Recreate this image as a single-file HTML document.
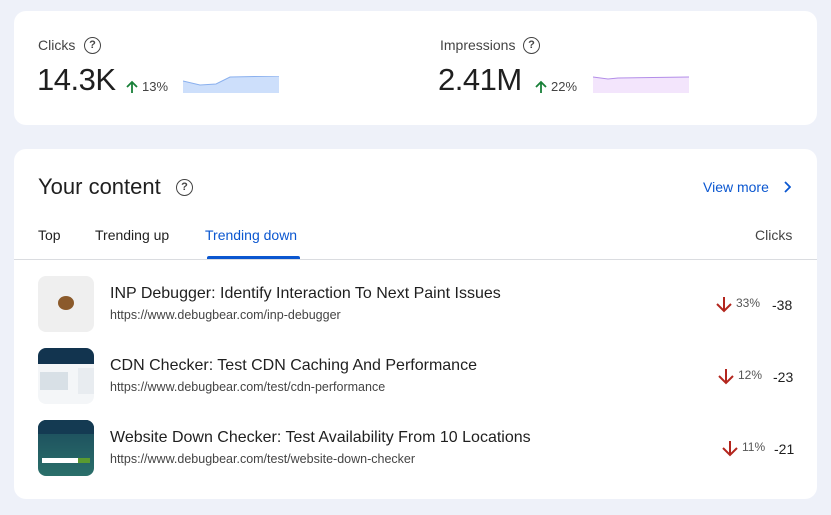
<!DOCTYPE html>
<html><head><style>
*{margin:0;padding:0;box-sizing:border-box}
body{width:831px;height:515px;background:#eef1f9;font-family:"Liberation Sans",Arial,sans-serif;position:relative;overflow:hidden;color:#1f1f1f}
.card{position:absolute;background:#fff;border-radius:12px}
.a{position:absolute;white-space:nowrap;line-height:1.15}
.q{position:absolute;width:17px;height:17px;border:1.6px solid #444;border-radius:50%;font-size:11px;font-weight:bold;text-align:center;line-height:14px;color:#444}
.t{font-size:16px;color:#1f1f1f}
.u{font-size:12.5px;color:#444}
.p{font-size:12px;color:#555}
.n{font-size:14px;color:#1f1f1f}
.th{position:absolute;left:38px;width:56px;height:56px;border-radius:8px;overflow:hidden}
</style></head><body>
<div class="card" style="left:14px;top:11px;width:803px;height:114px"></div>
<div class="a" style="left:38px;top:37px;font-size:14px;color:#444">Clicks</div>
<div class="q" style="left:84px;top:37px">?</div>
<div class="a" style="left:37px;top:62px;font-size:31px;letter-spacing:-0.5px;color:#1f1f1f">14.3K</div>
<svg class="a" style="left:126px;top:80px" width="12" height="14"><path d="M6 13V2M1 7l5-5 5 5" stroke="#188038" stroke-width="1.8" fill="none"/></svg>
<div class="a" style="left:142px;top:80px;font-size:13px;color:#444">13%</div>
<svg class="a" style="left:183px;top:76px" width="96" height="17"><path d="M0 5 L17 9 L33 8 L47 1 L96 0 L96 17 L0 17Z" fill="#cddffb"/><path d="M0 5 L17 9 L33 8 L47 1 L96 0" stroke="#8ab0ee" fill="none"/></svg>
<div class="a" style="left:440px;top:37px;font-size:14px;color:#444">Impressions</div>
<div class="q" style="left:523px;top:37px">?</div>
<div class="a" style="left:438px;top:62px;font-size:31px;letter-spacing:-0.5px;color:#1f1f1f">2.41M</div>
<svg class="a" style="left:535px;top:80px" width="12" height="14"><path d="M6 13V2M1 7l5-5 5 5" stroke="#188038" stroke-width="1.8" fill="none"/></svg>
<div class="a" style="left:551px;top:80px;font-size:13px;color:#444">22%</div>
<svg class="a" style="left:593px;top:76px" width="96" height="17"><path d="M0 1 L15 3 L25 2 L96 1 L96 17 L0 17Z" fill="#f3e5fc"/><path d="M0 1 L15 3 L25 2 L96 1" stroke="#b38ee8" fill="none"/></svg>

<div class="card" style="left:14px;top:149px;width:803px;height:350px"></div>
<div class="a" style="left:38px;top:174px;font-size:22px;color:#1f1f1f">Your content</div>
<div class="q" style="left:176px;top:179px">?</div>
<div class="a" style="left:703px;top:179px;font-size:14px;color:#0b57d0">View more</div>
<svg class="a" style="left:783px;top:181px" width="8" height="12"><path d="M2 1l5 5-5 5" stroke="#0b57d0" stroke-width="1.8" fill="none"/></svg>
<div class="a" style="left:38px;top:227px;font-size:14px;color:#1f1f1f">Top</div>
<div class="a" style="left:95px;top:227px;font-size:14px;color:#1f1f1f">Trending up</div>
<div class="a" style="left:205px;top:227px;font-size:14px;color:#0b57d0">Trending down</div>
<div class="a" style="left:755px;top:227px;font-size:14px;color:#444">Clicks</div>
<div class="a" style="left:207px;top:256px;width:93px;height:3px;background:#0b57d0;border-radius:2px 2px 0 0"></div>
<div class="a" style="left:14px;top:259px;width:803px;height:1px;background:#dadce0"></div>

<div class="th" style="top:276px;background:#efefef"><div style="position:absolute;left:20px;top:20px;width:16px;height:14px;background:#8b5a2b;border-radius:50%"></div></div>
<div class="a t" style="left:110px;top:285px">INP Debugger: Identify Interaction To Next Paint Issues</div>
<div class="a u" style="left:110px;top:308px">https://www.debugbear.com/inp-debugger</div>
<svg class="a" style="left:715px;top:295px" width="18" height="18"><path d="M9 2v14M2 9l7 7 7-7" stroke="#b3261e" stroke-width="2" fill="none"/></svg>
<div class="a p" style="left:736px;top:297px">33%</div>
<div class="a n" style="left:772px;top:297px">-38</div>

<div class="th" style="top:348px;background:#f4f6f8"><div style="height:16px;background:#12344f"></div><div style="position:absolute;left:2px;top:24px;width:28px;height:18px;background:#d8e0e6"></div><div style="position:absolute;left:40px;top:20px;width:16px;height:26px;background:#e8ecf0"></div></div>
<div class="a t" style="left:110px;top:357px">CDN Checker: Test CDN Caching And Performance</div>
<div class="a u" style="left:110px;top:380px">https://www.debugbear.com/test/cdn-performance</div>
<svg class="a" style="left:717px;top:367px" width="18" height="18"><path d="M9 2v14M2 9l7 7 7-7" stroke="#b3261e" stroke-width="2" fill="none"/></svg>
<div class="a p" style="left:738px;top:369px">12%</div>
<div class="a n" style="left:773px;top:369px">-23</div>

<div class="th" style="top:420px;background:linear-gradient(#1b4a5c,#2a6f6a)"><div style="height:14px;background:#143a52"></div><div style="position:absolute;left:4px;top:38px;width:36px;height:5px;background:#fff"></div><div style="position:absolute;left:40px;top:38px;width:12px;height:5px;background:#5a9a30"></div></div>
<div class="a t" style="left:110px;top:429px">Website Down Checker: Test Availability From 10 Locations</div>
<div class="a u" style="left:110px;top:452px">https://www.debugbear.com/test/website-down-checker</div>
<svg class="a" style="left:721px;top:439px" width="18" height="18"><path d="M9 2v14M2 9l7 7 7-7" stroke="#b3261e" stroke-width="2" fill="none"/></svg>
<div class="a p" style="left:742px;top:441px">11%</div>
<div class="a n" style="left:774px;top:441px">-21</div>
</body></html>
